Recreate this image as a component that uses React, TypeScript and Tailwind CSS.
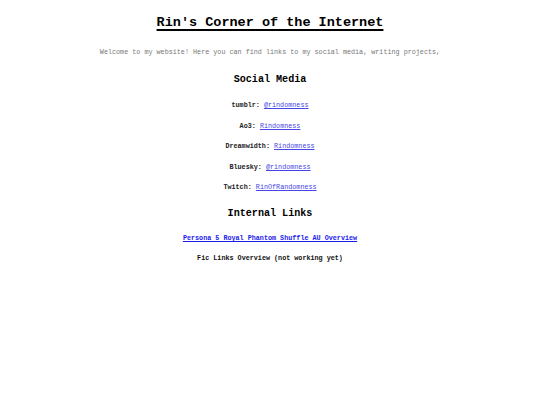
const SOCIALS = [
  { label: "tumblr", handle: "@rindomness" },
  { label: "Ao3", handle: "Rindomness" },
  { label: "Dreamwidth", handle: "Rindomness" },
  { label: "Bluesky", handle: "@rindomness" },
  { label: "Twitch", handle: "RinOfRandomness" },
];

const mono = { fontFamily: '"Liberation Mono", "Courier New", monospace' };

export default function App() {
  return (
    <div
      className="min-h-[405px] w-[540px] bg-white text-black flex flex-col items-center pt-[13px]"
      style={mono}
    >
      <h1 className="text-[13.5px] leading-[20px] font-bold underline decoration-2 underline-offset-[3px]">
        Rin's Corner of the Internet
      </h1>

      <p className="mt-[14px] text-[6.75px] leading-[10px] text-[#777] whitespace-nowrap">
        Welcome to my website! Here you can find links to my social media, writing projects,
      </p>

      <h2 className="mt-[16px] text-[10.1px] leading-[14px] font-bold">Social Media</h2>

      <ul className="mt-[13px] flex flex-col items-center gap-[10.5px]">
        {SOCIALS.map((s) => (
          <li key={s.label} className="text-[6.75px] leading-[10px]">
            <span className="font-bold text-[#222]">{s.label}:</span>{" "}
            <a href="#" className="text-[#4646e6] underline">
              {s.handle}
            </a>
          </li>
        ))}
      </ul>

      <h2 className="mt-[15px] text-[10.1px] leading-[14px] font-bold">Internal Links</h2>

      <a
        href="#"
        className="mt-[12px] text-[6.75px] leading-[10px] font-bold text-[#1a1aee] underline"
      >
        Persona 5 Royal Phantom Shuffle AU Overview
      </a>
      <p className="mt-[10px] text-[6.75px] leading-[10px] font-bold text-[#111]">
        Fic Links Overview (not working yet)
      </p>
    </div>
  );
}
